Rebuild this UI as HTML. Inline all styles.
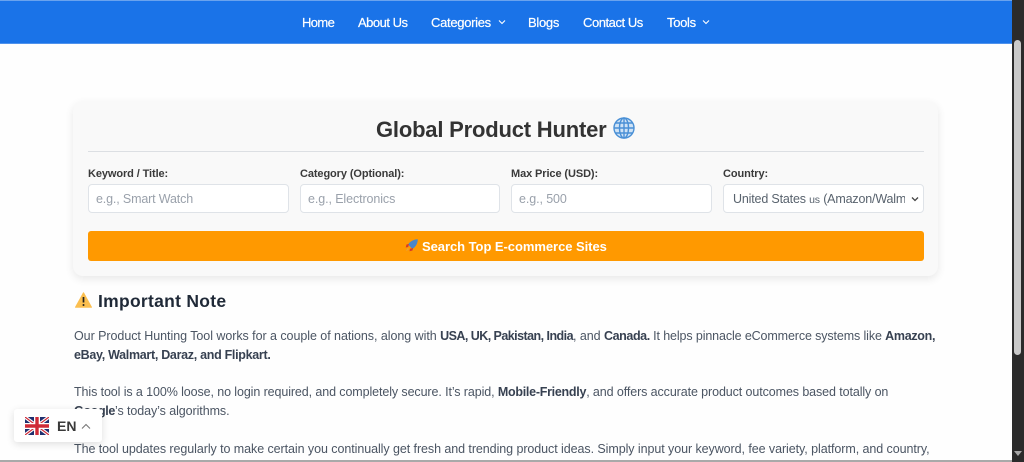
<!DOCTYPE html>
<html lang="en"><head><meta charset="utf-8"><title>Global Product Hunter</title>
<style>
html,body{margin:0;padding:0;width:1024px;height:462px;overflow:hidden;background:#fefefe;font-family:"Liberation Sans",Arial,sans-serif}
.a{position:absolute;white-space:nowrap}
.nav{position:absolute;left:0;top:0;width:1012px;height:43px;background:#1a73e8;border-top:1px solid #6aa3ee;box-sizing:border-box}
.line{position:absolute;left:0;top:43px;width:1012px;height:1px;background:#4f92ec}
.n{position:absolute;top:15px;color:#fff;font-size:13px;line-height:15px;font-weight:400;white-space:nowrap;letter-spacing:-.3px;-webkit-text-stroke:.2px #fff}
.card{position:absolute;left:73px;top:101px;width:865px;height:175px;background:#f9f9f9;border-radius:10px;box-shadow:0 3px 9px rgba(0,0,0,.09)}
.lb{position:absolute;top:168px;font-size:11px;line-height:13px;font-weight:700;color:#3a3a3a;white-space:nowrap;letter-spacing:-.1px}
.in{position:absolute;top:184px;height:29px;box-sizing:border-box;background:#fff;border:1px solid #dfe3e8;border-radius:4px;font-size:12.5px;line-height:28px;color:#9aa1ab;padding-left:7px;white-space:nowrap;overflow:hidden;letter-spacing:-.1px}
.p{position:absolute;left:74px;font-size:12.5px;line-height:19px;color:#4b5563;white-space:nowrap;letter-spacing:-.08px}
.p b{color:#374151;font-weight:700;letter-spacing:-.35px}
</style></head><body>
<div class="nav"></div><div class="line"></div>
<div class="n" style="left:302px;letter-spacing:-.6px">Home</div>
<div class="n" style="left:358px;letter-spacing:-.5px">About Us</div>
<div class="n" style="left:431px">Categories</div>
<svg class="a" style="left:498px;top:19px" width="8" height="6" viewBox="0 0 8 6"><path d="M1 1.5L4 4.5L7 1.5" fill="none" stroke="#fff" stroke-width="1.1"/></svg>
<div class="n" style="left:528px">Blogs</div>
<div class="n" style="left:583px;letter-spacing:-.45px">Contact Us</div>
<div class="n" style="left:667px">Tools</div>
<svg class="a" style="left:702px;top:19px" width="8" height="6" viewBox="0 0 8 6"><path d="M1 1.5L4 4.5L7 1.5" fill="none" stroke="#fff" stroke-width="1.1"/></svg>

<div class="card"></div>
<div class="a" style="left:376px;top:116px;font-size:22px;line-height:27px;font-weight:700;color:#333;letter-spacing:-.2px">Global Product Hunter</div>
<svg class="a" style="left:613px;top:117px" width="22" height="22" viewBox="0 0 22 22" fill="none" stroke="#4a90d6" stroke-width="1.4"><circle cx="11" cy="11" r="10" fill="#cfe3f6"/><ellipse cx="11" cy="11" rx="4.5" ry="10"/><path d="M11 1V21M1 11H21M2.5 6H19.5M2.5 16H19.5"/></svg>
<div class="a" style="left:88px;top:151px;width:836px;height:1px;background:#dcdfe3"></div>

<div class="lb" style="left:88px">Keyword / Title:</div>
<div class="lb" style="left:300px">Category (Optional):</div>
<div class="lb" style="left:511px">Max Price (USD):</div>
<div class="lb" style="left:723px">Country:</div>

<div class="in" style="left:88px;width:201px;letter-spacing:-.15px">e.g., Smart Watch</div>
<div class="in" style="left:300px;width:200px">e.g., Electronics</div>
<div class="in" style="left:511px;width:201px">e.g., 500</div>
<div class="in" style="left:723px;width:201px;color:#59636e;padding-left:9px;line-height:29px;letter-spacing:-.17px"><span style="display:block;width:172px;overflow:hidden">United States <span style="font-size:10.5px">us</span> (Amazon/Walmart)</span></div>
<svg class="a" style="left:911px;top:196px" width="8" height="6" viewBox="0 0 8 6"><path d="M1 1.5L4 4.5L7 1.5" fill="none" stroke="#444" stroke-width="1.3"/></svg>

<div class="a" style="left:88px;top:231px;width:836px;height:30px;background:#ff9900;border-radius:3px"></div>
<svg class="a" style="left:405px;top:239px" width="13" height="13" viewBox="0 0 13 13"><path d="M12.8.2C9.5.2 5.5 1.8 3 5.5L7.5 10C11.2 7.5 12.8 3.5 12.8.2Z" fill="#4a86c8"/><path d="M4 5L1.5 5.5 .7 8.5 3.2 8ZM8 9L7.5 11.5 4.5 12.3 5 9.8Z" fill="#d8392b"/><path d="M3 9C2 9.5 1.5 11 1 12C2 11.5 3.5 11 4 10Z" fill="#e8a33a"/></svg>
<div class="a" style="left:422px;top:239px;font-size:13px;line-height:16px;font-weight:700;color:#fff;letter-spacing:-.05px">Search Top E-commerce Sites</div>

<svg class="a" style="left:75px;top:292px" width="17" height="16" viewBox="0 0 17 16"><path d="M8.5 .8L16.5 15.2H.5Z" fill="#fbbf50" stroke="#fbbf50" stroke-linejoin="round"/><path d="M8.5 5V10.5" stroke="#222" stroke-width="1.7"/><circle cx="8.5" cy="13" r="1" fill="#222"/></svg>
<div class="a" style="left:98px;top:291px;font-size:17.5px;line-height:21px;font-weight:700;color:#1f2937;letter-spacing:.28px">Important Note</div>

<div class="p" style="top:327px;letter-spacing:-.05px">Our Product Hunting Tool works for a couple of nations, along with <b style="letter-spacing:-.54px">USA, UK, Pakistan, India</b>, and <b style="letter-spacing:-.4px">Canada.</b><span style="letter-spacing:-.12px"> It helps pinnacle eCommerce systems like </span><b style="letter-spacing:-.3px">Amazon,</b></div>
<div class="p" style="top:346px"><b style="letter-spacing:-.3px">eBay, Walmart, Daraz, and Flipkart.</b></div>
<div class="p" style="top:383px;letter-spacing:-.1px">This tool is a 100% loose, no login required, and completely secure. It’s rapid, <b style="letter-spacing:-.27px">Mobile-Friendly</b>, and offers accurate product outcomes based totally on</div>
<div class="p" style="top:402px"><b>Google</b>’s today’s algorithms.</div>
<div class="p" style="top:440px;letter-spacing:-.07px">The tool updates regularly to make certain you continually get fresh and trending product ideas. Simply input your keyword, fee variety, platform, and country,</div>

<div class="a" style="left:14px;top:409px;width:88px;height:33px;background:#fff;border-radius:3px;box-shadow:0 2px 8px rgba(0,0,0,.13)"></div>
<svg class="a" style="left:25px;top:417px" width="24" height="18" viewBox="0 0 24 18"><rect width="24" height="18" fill="#1f2f6e"/><path d="M0 0L24 18M24 0L0 18" stroke="#fff" stroke-width="3.4"/><path d="M0 0L24 18M24 0L0 18" stroke="#cf2a36" stroke-width="1.2"/><path d="M12 0V18M0 9H24" stroke="#fff" stroke-width="6"/><path d="M12 0V18M0 9H24" stroke="#cf2a36" stroke-width="3.4"/></svg>
<div class="a" style="left:57px;top:417px;font-size:14px;line-height:18px;font-weight:700;color:#3a3a3a">EN</div>
<svg class="a" style="left:81px;top:423px" width="10" height="7" viewBox="0 0 10 7"><path d="M1 5.5L5 1.5L9 5.5" fill="none" stroke="#777" stroke-width="1.1"/></svg>

<div class="a" style="left:1012px;top:0;width:12px;height:462px;background:#2b2b2b"></div>
<div class="a" style="left:1014px;top:40px;width:7px;height:315px;background:#c9c9c9;border-radius:4px"></div>
<svg class="a" style="left:1014px;top:451px" width="8" height="5" viewBox="0 0 8 5"><path d="M0 0H8L4 5Z" fill="#a8a8a8"/></svg>
<div class="a" style="left:0;top:460px;width:1012px;height:2px;background:#a9a9a9"></div>
</body></html>
